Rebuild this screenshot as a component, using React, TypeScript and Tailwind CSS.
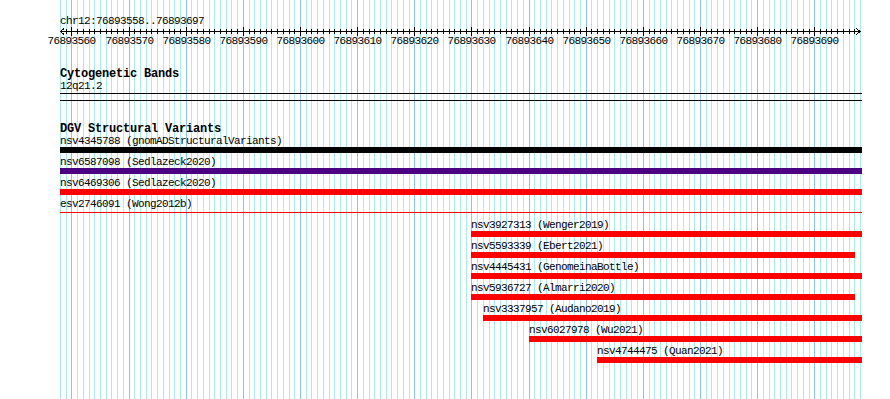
const LEFT = 60;
const SCALE = 800 / 140;
const START = 76893558;

type Feature = {
  name: string;
  x0: number;
  x1: number;
  bar: string;
  thin?: boolean;
};

const features: Feature[] = [
  { name: 'nsv4345788 (gnomADStructuralVariants)', x0: 60, x1: 862, bar: 'bg-black' },
  { name: 'nsv6587098 (Sedlazeck2020)', x0: 60, x1: 862, bar: 'bg-[#4b0082]' },
  { name: 'nsv6469306 (Sedlazeck2020)', x0: 60, x1: 862, bar: 'bg-[#ff0000]' },
  { name: 'esv2746091 (Wong2012b)', x0: 60, x1: 862, bar: 'bg-[#ff0000]', thin: true },
  { name: 'nsv3927313 (Wenger2019)', x0: 471, x1: 862, bar: 'bg-[#ff0000]' },
  { name: 'nsv5593339 (Ebert2021)', x0: 471, x1: 855, bar: 'bg-[#ff0000]' },
  { name: 'nsv4445431 (GenomeinaBottle)', x0: 471, x1: 862, bar: 'bg-[#ff0000]' },
  { name: 'nsv5936727 (Almarri2020)', x0: 471, x1: 855, bar: 'bg-[#ff0000]' },
  { name: 'nsv3337957 (Audano2019)', x0: 483, x1: 862, bar: 'bg-[#ff0000]' },
  { name: 'nsv6027978 (Wu2021)', x0: 529, x1: 862, bar: 'bg-[#ff0000]' },
  { name: 'nsv4744475 (Quan2021)', x0: 597, x1: 862, bar: 'bg-[#ff0000]' },
];

const baseX = (i: number) => Math.round(LEFT + i * SCALE) + 0.5;
const isMajor = (i: number) => (START + i) % 10 === 0;
const bases = Array.from({ length: 141 }, (_, i) => i);

function Grid() {
  return (
    <svg className="absolute inset-0" width={890} height={399} shapeRendering="crispEdges">
      {bases.map((i) => (
        <line
          key={i}
          x1={baseX(i)}
          x2={baseX(i)}
          y1={0}
          y2={399}
          stroke={isMajor(i) ? '#88c4f0' : '#a8ecf0'}
          strokeWidth={1}
        />
      ))}
    </svg>
  );
}

function Ruler() {
  const end = baseX(140);
  return (
    <svg width={890} height={19} className="block" shapeRendering="crispEdges">
      <line x1={LEFT} x2={end} y1={4.5} y2={4.5} stroke="#000" />
      {/* arrow heads */}
      <polyline points={`${LEFT + 4},1.5 ${LEFT + 0.5},4.5 ${LEFT + 4},7.5`} fill="none" stroke="#000" />
      <polyline points={`${end - 4},1.5 ${end - 0.5},4.5 ${end - 4},7.5`} fill="none" stroke="#000" />
      {bases.slice(1, 140).map((i) => (
        <line
          key={i}
          x1={baseX(i)}
          x2={baseX(i)}
          y1={isMajor(i) ? 0 : 2}
          y2={isMajor(i) ? 9 : 7}
          stroke="#000"
        />
      ))}
      {bases
        .filter((i) => isMajor(i))
        .map((i) => (
          <text
            key={i}
            x={baseX(i)}
            y={17}
            textAnchor="middle"
            fontFamily="'Liberation Mono', monospace"
            fontSize={11}
            letterSpacing={-0.6}
            fill="#000"
          >
            {START + i}
          </text>
        ))}
    </svg>
  );
}

function FeatureRow({ f }: { f: Feature }) {
  return (
    <div className="flex flex-col mb-[4px]" style={{ marginLeft: f.x0, width: f.x1 - f.x0 }}>
      <span className="h-[11px] leading-[11px] text-[11px] tracking-[-0.6px] whitespace-nowrap">{f.name}</span>
      {f.thin ? (
        <div className="h-[6px] flex flex-col pt-[2px]">
          <div className={`h-[1px] ${f.bar}`} />
        </div>
      ) : (
        <div className={`h-[6px] ${f.bar}`} />
      )}
    </div>
  );
}

export default function App() {
  return (
    <div className="relative w-[890px] h-[399px] overflow-hidden bg-white text-black font-['Liberation_Mono',monospace]">
      <Grid />
      <div className="relative flex flex-col">
        <span className="ml-[60px] mt-[16px] h-[11px] leading-[11px] text-[11px] tracking-[-0.6px] whitespace-nowrap">
          chr12:76893558..76893697
        </span>
        <Ruler />

        {/* Cytogenetic Bands */}
        <span className="ml-[60px] mt-[22px] h-[12px] leading-[12px] text-[12px] font-bold tracking-[-0.2px] whitespace-nowrap">
          Cytogenetic Bands
        </span>
        <span className="ml-[60px] mt-[1px] h-[11px] leading-[11px] text-[11px] tracking-[-0.6px]">12q21.2</span>
        <div className="ml-[60px] mt-[1px] w-[802px] h-[8px] border-y border-black" />

        {/* DGV Structural Variants */}
        <span className="ml-[60px] mt-[22px] h-[12px] leading-[12px] text-[12px] font-bold tracking-[-0.2px] whitespace-nowrap">
          DGV Structural Variants
        </span>
        <div className="mt-[1px] flex flex-col">
          {features.map((f) => (
            <FeatureRow key={f.name} f={f} />
          ))}
        </div>
      </div>
    </div>
  );
}
